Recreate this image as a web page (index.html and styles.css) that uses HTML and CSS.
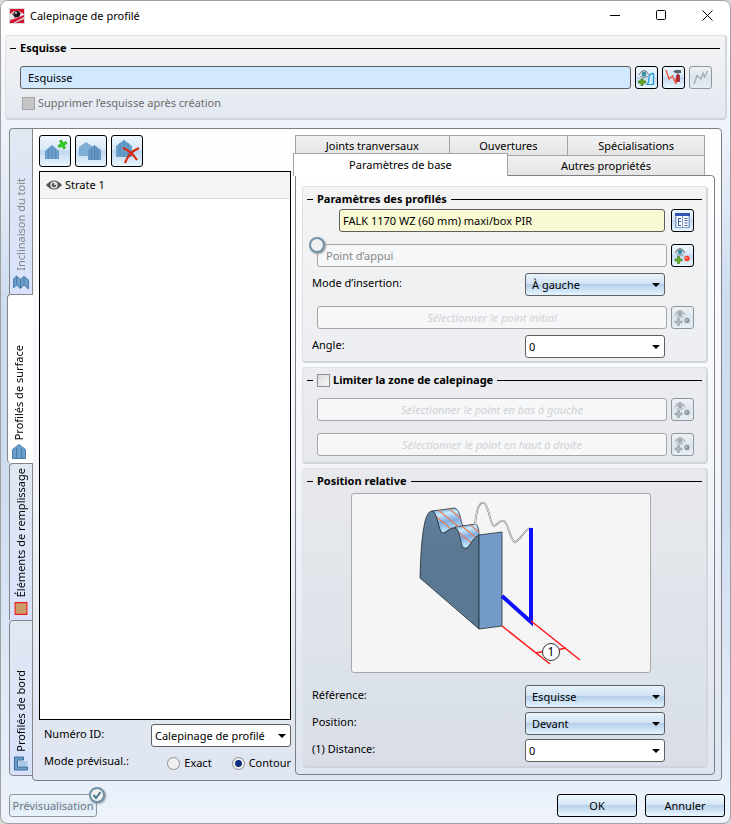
FILE: index.html
```html
<!DOCTYPE html>
<html lang="fr">
<head>
<meta charset="utf-8">
<title>Calepinage de profilé</title>
<link rel="stylesheet" href="styles.css">
</head>
<body>
<svg class="defs" aria-hidden="true">
  <defs>
    <symbol id="pick" viewBox="0 0 17 17">
      <path d="M1 6Q3 1.500 6 1.500T11 6" fill="none" stroke="currentColor" stroke-width="1"/>
      <path d="M2 5.500Q6-.5 10 5.500M2.500 7.500Q6 9 9.500 7.500" fill="none" stroke="currentColor" stroke-width=".8"/>
      <circle class="iris" cx="6" cy="5" r="2.400"/>
      <path class="plus" d="M3.500 9.500h2v2.500h2.500v2h-2.500v2.500h-2V14H1v-2h2.500z"/>
      <circle class="dot" cx="13" cy="11.500" r="2.700"/>
      <circle cx="12.300" cy="11" r="1" fill="#fff" opacity=".5"/>
    </symbol>
    <symbol id="house" viewBox="0 0 14 15">
      <path d="M.5 5.500L7 .5l6.500 5v9H.5z" fill="#6b9fcb" stroke="#4a7caa"/>
      <path d="M4.500 4v10M9.500 4v10" stroke="#4a7caa" fill="none"/>
    </symbol>
  </defs>
</svg>
<main class="window">
  <header class="titlebar">
    <svg class="logo" viewBox="0 0 16 16" aria-hidden="true"><path fill="#d7dbde" d="M0 0h16v16H0z"/><path fill="#d5112f" d="M1 1h14v6L1 13z"/><path fill="#e9e4e6" d="M1 6q4-4 9-3l5 3v2L1 12z"/><path d="M3 6q4-4 9-1l-2 4-4 1z" fill="#6b5157"/><circle cx="8" cy="6" r="3" fill="#171519"/><circle cx="7" cy="5" r=".9" fill="#fff"/><path fill="#d5112f" d="M1 15v-2l14-6v2L4 15z"/><path fill="#d5112f" d="M6 15l9-4v4z"/></svg>
    <h1>Calepinage de profilé</h1>
    <div class="caption">
      <button aria-label="Réduire"><svg viewBox="0 0 11 11"><path d="M0 5.500h10"/></svg></button>
      <button aria-label="Agrandir"><svg viewBox="0 0 11 11"><rect x=".5" y=".5" width="9" height="9" rx="1"/></svg></button>
      <button aria-label="Fermer"><svg viewBox="0 0 11 11"><path d="M.5.5l10 10M10.500.5l-10 10"/></svg></button>
    </div>
  </header>

  <section class="group sketch">
    <h2>Esquisse</h2>
    <div class="row tight">
      <input class="field blue" type="text" value="Esquisse" aria-label="Esquisse">
      <button class="tool" aria-label="Sélectionner l’esquisse"><svg viewBox="0 0 17 17"><path d="M1 6Q3 1.500 6 1.500T11 6M2.500 7.500Q6 9 9.500 7.500" fill="none" stroke="#777"/><circle cx="6" cy="5" r="2.400" fill="#3b91a5"/><path d="M3 10h2v2h2.500v2H5v2.500H3V14H.5v-2H3z" fill="#69b51d" stroke="#3c7315" stroke-width=".8"/><path d="M9 15.500q2-2 2-8 2-4 4.500-3v11z" fill="#c5e8fb" stroke="#2196d3" stroke-width="1.200"/></svg></button>
      <button class="tool" aria-label="Modifier l’esquisse"><svg viewBox="0 0 17 17"><path d="M1 1l3 9 3.500-3 3.500 8V9" fill="none" stroke="#f05a45" stroke-width="1.500"/><path d="M8 2.500q3-2.500 5-1.500h3v3H10z" fill="#59636c"/><path d="M12 4h2v3h-2z" fill="#999"/><path d="M11.500 6h3v6.500h-3z" fill="#c3222d" stroke="#7d1820" stroke-width=".6"/></svg></button>
      <button class="tool off" disabled aria-label="Dessiner l’esquisse"><svg viewBox="0 0 17 17"><path d="M2 15.500L5 6.500l4 3.500 2-6 1.500 4L15.500 2" fill="none" stroke="#888d93" stroke-width="1.500"/></svg></button>
    </div>
    <label class="check muted"><input type="checkbox" disabled> Supprimer l’esquisse après création</label>
  </section>

  <div class="body">
    <nav class="side" role="tablist" aria-orientation="vertical">
      <button class="vtab dim" role="tab"><span>Inclinaison du toit</span><svg class="sicon" viewBox="0 0 16 15"><path d="M.5 4l3-3 4 3.500 3.500-3 4.500 3.500v9l-4.500-4-3.500 3.500-4-3.500-3 3z" fill="#6b9fcb" stroke="#4a7caa"/><path d="M3.500 1v9M7.500 4.500v9M11 1.500v9" stroke="#4a7caa"/></svg></button>
      <button class="vtab on" role="tab" aria-selected="true"><span>Profilés de surface</span><svg class="sicon" viewBox="0 0 14 15"><use href="#house"/></svg></button>
      <button class="vtab long" role="tab"><span>Éléments de remplissage</span><svg class="sicon" viewBox="0 0 14 14"><path d="M1.500 1.500h11v11h-11z" fill="#c89d69" stroke="#f01b1b"/></svg></button>
      <button class="vtab last" role="tab"><span>Profilés de bord</span><svg class="sicon" viewBox="0 0 15 15"><path d="M10 1H1v13h13v-3H4V4h6z" fill="#6b9fcb" stroke="#3d6c99"/><path d="M5 5h9v5H5z" fill="#a9c7e8"/></svg></button>
    </nav>

    <div class="pane">
      <div class="left">
        <div class="toolbar">
          <button class="big" aria-label="Ajouter une strate"><svg viewBox="0 0 28 28"><path d="M4 14l7-6 7 6v8H4z" fill="#6b9fcb"/><path d="M7.500 12v10M11 9v13M14.500 12v10" stroke="#5a8cba"/><path d="M18.500 4l2-1 1.500 3 3-1.500 1 2-3 1.500 1.500 3-2 1-1.500-3-3 1.500-1-2 3-1.500z" fill="#35d321" stroke="#28a41b" stroke-width=".8"/></svg></button>
          <button class="big" aria-label="Dupliquer la strate"><svg viewBox="0 0 28 28"><path d="M2 10l7-5 7 5v9H2z" fill="#80add4"/><path d="M11 13l6.500-5 6.500 5v10H11z" fill="#6598c5"/><path d="M14.500 12v11M17.500 9v14M20.500 12v11" stroke="#5284b3"/></svg></button>
          <button class="big" aria-label="Supprimer la strate"><svg viewBox="0 0 28 28"><path d="M3 9l8-6 8 6v11H3z" fill="#6b9fcb"/><path d="M7 6v14M11 3v17M15 6v14" stroke="#5284b3"/><path d="M10 11q8 3 14 12M26 11Q16 15 12 26" fill="none" stroke="#d8290d" stroke-width="2.200"/></svg></button>
        </div>
        <ul class="list">
          <li><svg class="eye" viewBox="0 0 16 10"><path d="M0 5q8-9 16 0-8 9-16 0z" fill="#555"/><circle cx="8" cy="5" r="3.600" fill="#eee"/><circle cx="8" cy="5" r="2.300" fill="#555"/><circle cx="9" cy="4" r="1" fill="#fff"/></svg>Strate 1</li>
        </ul>
        <div class="row idrow"><label for="ident">Numéro ID:</label><span class="drop"><select id="ident" class="field"><option>Calepinage de profilé</option></select></span></div>
        <div class="row moderow"><span>Mode prévisual.:</span><span class="radios"><label><input type="radio" name="mode">Exact</label><label><input type="radio" name="mode" checked>Contour</label></span></div>
      </div>

      <div class="right">
        <div class="tabs" role="tablist">
          <div class="tabrow back"><button role="tab">Joints tranversaux</button><button role="tab">Ouvertures</button><button role="tab">Spécialisations</button></div>
          <div class="tabrow front"><button class="active" role="tab" aria-selected="true">Paramètres de base</button><button role="tab">Autres propriétés</button></div>
        </div>
        <div class="sheet">
          <section class="group profiles">
            <h2>Paramètres des profilés</h2>
            <div class="row product"><input class="field yellow" type="text" value="FALK 1170 WZ (60 mm) maxi/box PIR" aria-label="Profilé"><button class="tool" aria-label="Catalogue"><svg viewBox="0 0 17 17"><path d="M1 1h15v15H1z" fill="#fff"/><path d="M1 1h15v3H1z" fill="#2f57b5"/><path d="M1 4h1.500v12H1zM14.500 4H16v12h-1.500zM8 4h1v12H8zM1 15h15v1H1z" fill="#7fa0cf"/><path d="M4.500 6v8M4.500 6.500H7M5 9.500h2M4.500 13.500H7M10.500 6.500h3M10.500 8.500h3M10.500 11h3M10.500 13.500h3" stroke="#254b9e" stroke-width=".9"/></svg></button></div>
            <div class="row point"><i class="knob"></i><input class="field ghost start" type="text" placeholder="Point d’appui" aria-label="Point d’appui"><button class="tool pickbtn" aria-label="Choisir le point d’appui"><svg><use href="#pick"/></svg></button></div>
            <div class="row pair"><label for="ins">Mode d’insertion:</label><span class="drop"><select id="ins" class="field glossy"><option>À gauche</option></select></span></div>
            <div class="row spaced"><input class="field ghost" type="text" disabled placeholder="Sélectionner le point initial" aria-label="Point initial"><button class="tool off pickbtn" disabled aria-label="Choisir le point initial"><svg><use href="#pick"/></svg></button></div>
            <div class="row pair"><label for="ang">Angle:</label><span class="drop"><select id="ang" class="field"><option>0</option></select></span></div>
          </section>

          <section class="group zone">
            <h2><label class="check"><input type="checkbox"> Limiter la zone de calepinage</label></h2>
            <div class="row"><input class="field ghost" type="text" disabled placeholder="Sélectionner le point en bas à gauche" aria-label="Point en bas à gauche"><button class="tool off pickbtn" disabled aria-label="Choisir le point en bas à gauche"><svg><use href="#pick"/></svg></button></div>
            <div class="row"><input class="field ghost" type="text" disabled placeholder="Sélectionner le point en haut à droite" aria-label="Point en haut à droite"><button class="tool off pickbtn" disabled aria-label="Choisir le point en haut à droite"><svg><use href="#pick"/></svg></button></div>
          </section>

          <section class="group relative">
            <h2>Position relative</h2>
            <div class="figure">
              <svg viewBox="0 0 298 178" role="img" aria-label="Distance entre le profilé et l’esquisse">
                <defs>
                  <linearGradient id="face" x2="0" y2="1"><stop offset="0" stop-color="#6180a0"/><stop offset=".3" stop-color="#5b7893"/></linearGradient>
                  <linearGradient id="w1" x2=".25" y2="1"><stop offset="0" stop-color="#527fae"/><stop offset=".3" stop-color="#c5ecff"/><stop offset=".6" stop-color="#84abe0"/><stop offset="1" stop-color="#c0edff"/></linearGradient>
                  <clipPath id="c1"><path d="M80 17l23-3c6 3 5 13 8 18l-8 2c-8 1-10 5-13 6-4-7-4-17-10-23z"/></clipPath>
                  <clipPath id="c2"><path d="M103 33l21-3c3 4 3 8 3 12-7 1-9 14-15 12-6-3-6-14-9-21z"/></clipPath>
                </defs>
                <g stroke="#252d35" stroke-width=".8" fill="url(#w1)">
                  <path d="M80 17l23-3c6 3 5 13 8 18l-8 2c-8 1-10 5-13 6-4-7-4-17-10-23z"/>
                  <path d="M103 33l21-3c3 4 3 8 3 12-7 1-9 14-15 12-6-3-6-14-9-21z"/>
                </g>
                <g stroke="#e37a55" stroke-width="1.200"><path clip-path="url(#c1)" d="M75 15l30 25M84 14l30 25M94 12l30 25"/><path clip-path="url(#c2)" d="M98 31l30 25M105 28l30 25M116 29l30 25"/></g>
                <path d="M68 84C69 45 72 17 80 17c6 1 6 22 11 22 5 0 6-6 12-5 6 1 5 21 10 21 4 0 7-11 14-14v94z" fill="url(#face)" stroke="#252d35" stroke-width=".8"/>
                <path d="M127 41l23-3v94l-23 3z" fill="#749ac7" stroke="#252d35" stroke-width=".8"/>
                <path d="M123 31C125 10 129 8 132 9c5 2 6 22 10 23 4-1 6-7 10-5 5 3 6 20 11 21 5-1 9-12 15-14" fill="none" stroke="#777" stroke-width="1.800"/>
                <path d="M123 31C125 10 129 8 132 9c5 2 6 22 10 23 4-1 6-7 10-5 5 3 6 20 11 21 5-1 9-12 15-14" fill="none" stroke="#f4f4f4" stroke-width=".9"/>
                <path d="M179 34v94l-29-26" fill="none" stroke="#1010ff" stroke-width="4"/>
                <path d="M150 132l48 38M179 127l49 39M184 159l10-2M205 156l9-2" fill="none" stroke="#ff1717" stroke-width="1.500"/>
                <circle cx="199" cy="158" r="8.500" fill="#fff" stroke="#333"/>
                <text x="199" y="162" text-anchor="middle" font-size="12">1</text>
              </svg>
            </div>
            <div class="row pair"><label for="ref">Référence:</label><span class="drop"><select id="ref" class="field glossy"><option>Esquisse</option></select></span></div>
            <div class="row pair"><label for="pos">Position:</label><span class="drop"><select id="pos" class="field glossy"><option>Devant</option></select></span></div>
            <div class="row pair"><label for="dist">(1) Distance:</label><span class="drop"><select id="dist" class="field"><option>0</option></select></span></div>
          </section>
        </div>
      </div>
    </div>
  </div>

  <footer class="footer">
    <div class="preview"><button class="action faded">Prévisualisation</button><i class="knob tick"><svg viewBox="0 0 10 10"><path d="M1.500 5l2.500 3 4.500-6" fill="none" stroke="#47758f" stroke-width="2"/></svg></i></div>
    <button class="action">OK</button>
    <button class="action">Annuler</button>
  </footer>
</main>
</body>
</html>
```
FILE: styles.css
```css
* { box-sizing: border-box; }

body {
  margin: 0;
  background: #d9d9d9;
  font: 11px/16px "Noto Sans", "Open Sans", sans-serif;
  color: #000;
}

h1, h2, ul { margin: 0; padding: 0; font-size: inherit; font-weight: normal; }
button, input, select { margin: 0; padding: 0; font: inherit; color: inherit; }
svg { display: block; }
.defs { position: absolute; width: 0; height: 0; }

.window {
  display: flex;
  flex-direction: column;
  min-height: 100vh;
  border: 1px solid #a0a0a0;
  border-radius: 8px;
  background: linear-gradient(#fff 0, #f2f5fb 10%, #eef2fa 16%, #cddcf0 37%, #cfddf1 60%, #e6eef9 93%, #eef3fb 100%);
  overflow: hidden;
}

.titlebar { display: flex; align-items: center; height: 34px; padding: 0 0 5px 8px; gap: 5px; background: #fff; }
.logo { width: 16px; height: 16px; }
.titlebar h1 { flex: 1; }
.caption { display: flex; }
.caption button { display: grid; place-items: center; width: 46px; height: 29px; border: 0; background: none; }
.caption svg { width: 11px; height: 11px; fill: none; stroke: #000; }

.group {
  border: 1px solid #dfe1e4;
  border-right: 2px solid #d3d6db;
  border-bottom: 2px solid #d0d4da;
  border-radius: 4px;
}
.group h2 { display: flex; align-items: center; gap: 4px; height: 16px; font-weight: bold; }
.group h2::before { content: ""; width: 6px; height: 1px; background: #000; }
.group h2::after { content: ""; flex: 1; height: 1px; background: #000; }

.row { display: flex; align-items: center; gap: 4px; }

.field {
  height: 23px;
  min-width: 0;
  border: 1px solid #5f5f5f;
  border-radius: 3px;
  background: #fff;
  appearance: none;
}
.row > .field { flex: 1; }
.blue { padding: 0 7px; background: #d1e8ff; }
.yellow { padding: 0 3px; background: #fafad2; }
.ghost { border-color: #a6a6a6; background: #f6f7f8; padding: 0 8px; text-align: center; }
.ghost::placeholder { color: #d0d2d5; font-style: italic; opacity: 1; }
.start { text-align: left; }
.start::placeholder { color: #868686; font-style: normal; }

.tool, .big {
  display: grid;
  place-items: center;
  border: 1px solid #000;
  border-radius: 3px;
  background: linear-gradient(#eff7fd 0, #d7e7f6 45%, #c0d7ee 50%, #e9f7ff 100%);
}
.tool { flex: none; width: 23px; height: 23px; }
.tool svg { width: 17px; height: 17px; }
.big { width: 32px; height: 32px; }
.big svg { width: 28px; height: 28px; }
.off { border-color: #8f969e; background: linear-gradient(#edf1f5, #dbe5ee 50%, #e6eef4); }
.pickbtn { color: #777; }
.iris { fill: #3b93a5; }
.plus { fill: #69b51d; stroke: #3c7315; stroke-width: .6px; }
.dot { fill: #fa3c26; }
.off svg { filter: grayscale(1); opacity: .6; }

.check { display: flex; align-items: center; gap: 3px; }
.check input {
  width: 13px;
  height: 13px;
  border: 1px solid #8e8f8f;
  background: linear-gradient(135deg, #dcdcdc, #f6f6f6);
  appearance: none;
}
.muted { color: #6d6d6d; }
.muted input { border-color: #a5a5a5; background: #c5c5c5; }

.sketch { margin: 0 3px 0 4px; padding: 4px 5px 7px 4px; background: linear-gradient(#f4f4f4, #e3e8f1); }
.sketch .row { margin: 10px 8px 6px 10px; }
.sketch .check { margin-left: 12px; }

.body { flex: 1; display: flex; margin: 8px 8px 0 6px; }

.side { display: flex; flex-direction: column; width: 26px; padding-bottom: 5px; flex: none; }
.vtab {
  position: relative;
  z-index: 1;
  flex: 166 1 0;
  display: flex;
  flex-direction: column;
  align-items: center;
  justify-content: flex-end;
  gap: 4px;
  margin-left: 2px;
  padding-bottom: 4px;
  border: 1px solid #858585;
  border-bottom: 0;
  border-radius: 4px 0 0 0;
  background: linear-gradient(#e0e8f2, #d8e2fc);
  white-space: nowrap;
}
.vtab span { writing-mode: vertical-rl; transform: rotate(180deg); }
.sicon { width: 16px; height: 15px; flex: none; }
.vtab.dim { color: #858585; }
.vtab.on { flex-grow: 170; margin-left: 0; padding-right: 4px; border-right: 0; border-radius: 4px 0 0 4px; background: #fff; }
.vtab.long { flex-grow: 157; }
.vtab.last { flex-grow: 155; border-bottom: 1px solid #858585; border-radius: 4px 0 0 4px; }

.pane {
  flex: 1;
  min-width: 0;
  display: flex;
  margin-left: -1px;
  padding: 6px 6px 5px;
  border: 1px solid #7c7f84;
  border-radius: 0 4px 4px 4px;
  background: linear-gradient(#fff 0, #f4f6fb 50%, #e1e7f0 90%, #dfe6f2 100%);
}

.left { display: flex; flex-direction: column; flex: 252 1 0; min-width: 0; }
.toolbar { display: flex; gap: 4px; margin-bottom: 4px; }
.list { flex: 1; border: 1px solid #000; background: #fff; list-style: none; }
.list li { display: flex; align-items: center; gap: 3px; height: 27px; padding-left: 6px; border-bottom: 1px solid #d9d9d9; background: #f4f4f4; }
.eye { width: 16px; height: 10px; }
.idrow, .moderow { justify-content: space-between; padding-left: 5px; }
.idrow { margin-top: 4px; }
.moderow { height: 28px; }
.idrow label, .pair label { padding-bottom: 4px; }
.radios { display: flex; gap: 20px; padding-top: 4px; }
.radios label { display: flex; align-items: center; gap: 4px; }
.radios input { width: 13px; height: 13px; border: 1px solid #8e8f8f; border-radius: 50%; background: #f0f0f0; appearance: none; }
.radios input:checked { background: radial-gradient(circle, #0d2d80 0 3px, #f0f0f0 4px); }

.drop { position: relative; display: flex; width: 140px; }
.drop select { width: 100%; padding-left: 3px; }
.drop::after {
  content: "";
  position: absolute;
  top: 10px;
  right: 5px;
  border: 4px solid transparent;
  border-top-color: #000;
  border-bottom: 0;
  pointer-events: none;
}
.drop .glossy { padding-left: 6px; background: linear-gradient(#e9f4fc 0, #d2e3f4 45%, #b5cee8 50%, #e4f5ff 100%); }

.right { display: flex; flex-direction: column; flex: 420 1 0; min-width: 0; margin-left: 4px; }
.tabs { padding-right: 10px; }
.tabrow { display: flex; }
.tabrow button { border: 1px solid #a3a3a3; background: linear-gradient(#f2f2f2, #e4e4e4); margin-left: -1px; }
.back { height: 21px; }
.back button { flex: 137 1 0; }
.back button:first-child { flex-grow: 154; margin-left: 0; }
.back button:nth-child(2) { flex-grow: 119; }
.front { height: 20px; margin-top: -1px; }
.front button { flex: 198 1 0; border-bottom: 0; }
.front .active {
  position: relative;
  z-index: 1;
  flex-grow: 215;
  margin: -2px 0 -1px -2px;
  background: #fff;
}
.sheet {
  flex: 1;
  display: flex;
  flex-direction: column;
  gap: 4px;
  padding: 10px 6px 6px;
  border: 1px solid #7c7f84;
  border-radius: 0 4px 4px 4px;
}
.sheet .group { padding: 4px; }
.sheet .row { margin-left: 10px; margin-right: 8px; }
.sheet .pair { justify-content: space-between; margin-left: 5px; margin-right: 37px; }
.sheet .profiles { padding-bottom: 3px; background: linear-gradient(#f4f4f4, #eceef1); }
.profiles h2 + .row { margin-top: 2px; }
.sheet .product { gap: 6px; margin-left: 32px; }
.point { position: relative; margin: 12px 0 6px; }
.spaced { margin: 10px 0 6px; }
.knob {
  position: absolute;
  left: -8px;
  top: -7px;
  display: grid;
  place-items: center;
  width: 16px;
  height: 16px;
  border: 2px solid #6f92a8;
  border-radius: 50%;
  background: #f1f1f1;
  box-shadow: 1px 1px 2px #999;
}
.zone { background: linear-gradient(#ecedf0, #e7e8ec); }
.zone .row { margin-top: 10px; }
.zone .row + .row { margin-top: 12px; margin-bottom: 2px; }
.relative { flex: 1; background: linear-gradient(#e8e9ed, #dce2e9 70%, #d8dde7); }
.figure { width: 300px; max-width: 100%; margin: 4px auto 12px 44px; border: 1px solid #a9a9a9; border-radius: 3px; background: #f5f5f5; }
.relative .pair + .pair { margin-top: 4px; }

.footer { display: flex; gap: 8px; padding: 13px 5px 6px 8px; }
.action {
  width: 80px;
  height: 23px;
  border: 1px solid #000;
  border-radius: 3px;
  background: linear-gradient(#eff7fd 0, #d7e7f6 45%, #b9d2ec 50%, #e9f7ff 100%);
}
.preview { position: relative; margin-right: auto; }
.faded { width: 88px; color: #6d7985; border-color: #8d949b; background: linear-gradient(#eff4fa, #dde8f4 50%, #e9f3fb); }
.tick { left: auto; right: -8px; }
.tick svg { width: 10px; height: 10px; }
```
